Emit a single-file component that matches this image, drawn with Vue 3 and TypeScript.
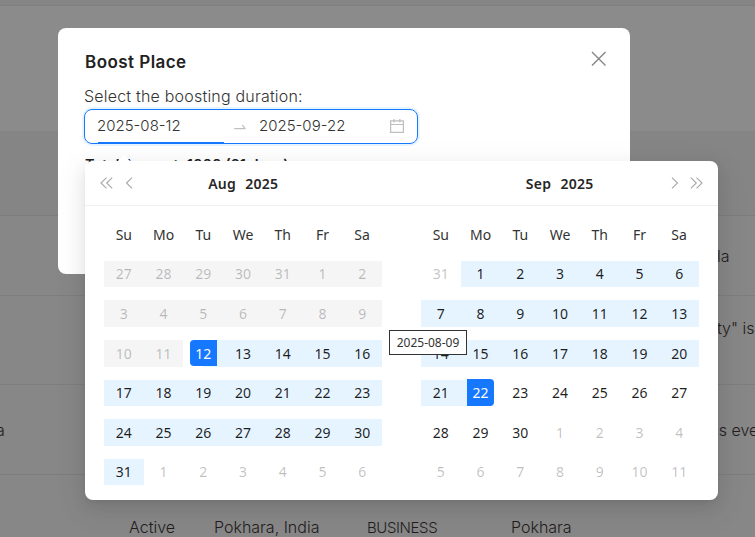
<script setup lang="ts">
import { computed } from 'vue'

interface Cell {
  key: string
  day: number
  inMonth: boolean
  disabled: boolean
  inRange: boolean
  isStart: boolean
  isEnd: boolean
}

const weekdays = ['Su', 'Mo', 'Tu', 'We', 'Th', 'Fr', 'Sa']
const today = new Date(2025, 7, 10)
const start = new Date(2025, 7, 12)
const end = new Date(2025, 8, 22)

function monthCells(year: number, month: number): Cell[] {
  const first = new Date(year, month, 1)
  const offset = first.getDay()
  return Array.from({ length: 42 }, (_, i) => {
    const d = new Date(year, month, 1 - offset + i)
    const inMonth = d.getMonth() === month
    const t = d.getTime()
    return {
      key: `${d.getMonth()}-${d.getDate()}`,
      day: d.getDate(),
      inMonth,
      disabled: t < today.getTime() + 2 * 86400000 && inMonth,
      inRange: inMonth && t >= start.getTime() && t <= end.getTime(),
      isStart: t === start.getTime(),
      isEnd: t === end.getTime(),
    }
  })
}

const panels = computed(() => [
  { title: 'Aug', year: '2025', side: 'left', cells: monthCells(2025, 7) },
  { title: 'Sep', year: '2025', side: 'right', cells: monthCells(2025, 8) },
])

// The previous-month tail that the left panel greys out along with early August.
function cellClass(cell: Cell, index: number, side: string) {
  const greyTail = side === 'left' && index < 5
  return {
    cell: true,
    muted: !cell.inMonth || cell.disabled,
    grey: cell.disabled || greyTail,
    range: cell.inRange,
    'range-start': cell.isStart,
    'range-end': cell.isEnd,
  }
}
</script>

<template>
  <div class="page">
    <div class="topbar"></div>
    <div class="band"></div>
    <div class="row row-a"><span class="far">la</span></div>
    <div class="row row-b"><span class="far high">ty" is c</span></div>
    <div class="row row-c">
      <span class="near">a</span>
      <span class="far mid">s even</span>
    </div>
    <div class="row-last">
      <span class="col c1">Active</span>
      <span class="col c2">Pokhara, India</span>
      <span class="col c3">BUSINESS</span>
      <span class="col">Pokhara</span>
    </div>

    <section class="modal">
      <header class="modal-head">
        <h2>Boost Place</h2>
        <svg class="close" width="16" height="16" viewBox="0 0 16 16" aria-hidden="true">
          <path d="M1 1 14.500 14.500M14.500 1 1 14.500" />
        </svg>
      </header>
      <p class="label">Select the boosting duration:</p>
      <div class="range-input">
        <span class="date first">2025-08-12</span>
        <svg class="swap" width="16" height="16" viewBox="0 0 1024 1024" aria-hidden="true">
          <path d="M873.1 596.2l-164-208A32 32 0 00684 376h-64.8c-6.7 0-10.4 7.7-6.3 13l144.3 183H152c-4.4 0-8 3.6-8 8v60c0 4.4 3.6 8 8 8h695.9c26.8 0 41.7-30.8 25.2-51.8z" />
        </svg>
        <span class="date">2025-09-22</span>
        <svg class="cal" width="18" height="18" viewBox="0 0 1024 1024" aria-hidden="true">
          <path d="M880 184H712v-64c0-4.4-3.6-8-8-8h-56c-4.4 0-8 3.6-8 8v64H384v-64c0-4.4-3.6-8-8-8h-56c-4.4 0-8 3.6-8 8v64H144c-17.7 0-32 14.3-32 32v664c0 17.7 14.3 32 32 32h736c17.7 0 32-14.3 32-32V216c0-17.7-14.3-32-32-32zm-40 656H184V460h656v380zM184 392V256h128v48c0 4.4 3.6 8 8 8h56c4.4 0 8-3.6 8-8v-48h256v48c0 4.4 3.6 8 8 8h56c4.4 0 8-3.6 8-8v-48h128v136H184z" />
        </svg>
        <i class="active-bar"></i>
      </div>
      <p class="total">Total Amount: 1000 (21 days)</p>
    </section>

    <section class="picker">
      <i class="picker-arrow"></i>
      <div class="panels">
        <div v-for="panel in panels" :key="panel.title" class="panel">
          <header class="panel-head" :class="panel.side">
            <template v-if="panel.side === 'left'">
              <svg class="nav dbl" width="13" height="12" viewBox="0 0 13 12" aria-hidden="true"><path d="M6.5.7 1 6l5.500 5.300M12.200.7 6.700 6l5.500 5.300" /></svg>
              <svg class="nav sgl" width="8" height="12" viewBox="0 0 8 12" aria-hidden="true"><path d="M7 .7 1.500 6 7 11.300" /></svg>
            </template>
            <div class="title"><span>{{ panel.title }}</span><span>{{ panel.year }}</span></div>
            <template v-if="panel.side === 'right'">
              <svg class="nav sgl" width="8" height="12" viewBox="0 0 8 12" aria-hidden="true"><path d="M1 .7 6.500 6 1 11.300" /></svg>
              <svg class="nav dbl" width="13" height="12" viewBox="0 0 13 12" aria-hidden="true"><path d="M.8.7 6.300 6 .8 11.300M6.500.7 12 6l-5.500 5.300" /></svg>
            </template>
          </header>
          <div class="grid-wrap">
            <div class="grid">
              <div v-for="w in weekdays" :key="w" class="weekday">{{ w }}</div>
              <div
                v-for="(cell, i) in panel.cells"
                :key="cell.key"
                :class="cellClass(cell, i, panel.side)"
              >
                <span class="num">{{ cell.day }}</span>
              </div>
            </div>
          </div>
        </div>
      </div>
    </section>

    <div class="tooltip">2025-08-09</div>
  </div>
</template>

<style>
html, body { margin: 0; }
</style>

<style scoped>
.page {
  position: relative;
  width: 755px;
  height: 537px;
  overflow: hidden;
  background: #8b8b8b;
  font-family: Inter, "Noto Sans", sans-serif;
  font-weight: 300;
  color: #231c1c;
  display: flex;
  flex-direction: column;
}
.topbar {
  height: 5px;
  flex: none;
  background: #858585;
  border-bottom: 1px solid #7f7f7f;
  margin-bottom: 125px;
}
.band { height: 84px; flex: none; background: #858585; }
.row, .row-last {
  flex: none;
  border-top: 1px solid #7d7d7d;
  display: flex;
  align-items: center;
  font-size: 16px;
  white-space: nowrap;
  background: #878787;
  box-sizing: border-box;
}
.row-a { height: 80px; }
.row-b { height: 89px; }
.row-c { height: 90px; }
.row-last { flex: 1; align-items: flex-end; padding: 0 0 0 129px; }
.near { margin-left: -4px; }
.far { margin-left: 717px; }
.row-b .far { margin-bottom: 24px; }
.row-c .far { margin-left: 714px; }
.c1 { width: 85px; }
.c2 { width: 153px; }
.c3 { width: 144px; font-size: 15px; letter-spacing: -.4px; }

.modal {
  position: absolute;
  left: 58px;
  top: 28px;
  width: 572px;
  height: 246px;
  box-sizing: border-box;
  padding: 23px 26px 24px 27px;
  background: #fff;
  border-radius: 8px;
  overflow: hidden;
}
.modal-head { display: flex; justify-content: space-between; align-items: flex-start; }
h2 {
  margin: 0;
  font-size: 17px;
  line-height: 22px;
  font-weight: 600;
  letter-spacing: .45px;
  color: #222;
}
.close { margin: 0 -3px 0 0; fill: none; stroke: #858585; stroke-width: 1.400; }
.label { margin: 12px 0 2px -1px; font-size: 16px; line-height: 22px; letter-spacing: .2px; color: #333; }
.range-input {
  position: relative;
  width: 334px;
  height: 35px;
  box-sizing: border-box;
  border: 1px solid #1677ff;
  border-radius: 8px;
  box-shadow: 0 0 0 2px rgba(5, 145, 255, .1);
  display: flex;
  align-items: center;
  padding: 0 11px 2px 12px;
  margin-left: -1px;
  font-size: 15px;
  color: #333;
}
.date { white-space: nowrap; }
.first { width: 136px; }
.swap { fill: #bfbfbf; margin: 2px 11px 0 -1px; flex: none; }
.cal { fill: #bfbfbf; margin-left: auto; flex: none; }
.active-bar {
  position: absolute;
  left: 13px;
  bottom: -1px;
  width: 126px;
  height: 2px;
  background: #1677ff;
}
.total { margin: 10px 0 0; font-size: 14.500px; line-height: 22px; font-weight: 600; color: #222; }

.picker {
  position: absolute;
  left: 85px;
  top: 161px;
  width: 633px;
  height: 339px;
  background: #fff;
  border-radius: 8px;
  box-shadow: 0 6px 16px 0 rgba(0, 0, 0, .08), 0 3px 6px -4px rgba(0, 0, 0, .12), 0 9px 28px 8px rgba(0, 0, 0, .05);
  font-family: "Noto Sans", "Open Sans", sans-serif;
  font-weight: 400;
  font-size: 14px;
  color: rgba(0, 0, 0, .88);
}
.picker-arrow {
  position: absolute;
  left: 33px;
  top: -6px;
  width: 0;
  height: 0;
  border-left: 6px solid transparent;
  border-right: 6px solid transparent;
  border-bottom: 6px solid #fff;
}
.panels { display: flex; }
.panel { width: 316.500px; flex: none; }
.panel-head {
  height: 45px;
  box-sizing: border-box;
  padding-top: 1px;
  border-bottom: 1px solid #f0f0f0;
  display: flex;
  align-items: center;
  position: relative;
  justify-content: center;
}
.title { display: flex; gap: 9px; font-weight: 600; font-size: 14px; letter-spacing: .3px; color: #262626; }
.nav { position: absolute; top: 16px; fill: none; stroke: #a8a8a8; stroke-width: 1.100; }
.left .dbl { left: 15px; }
.left .sgl { left: 40px; }
.right .sgl { right: 39px; }
.right .dbl { right: 15px; }
.grid-wrap { padding: 8.400px 19px 0; }
.grid { display: grid; grid-template-columns: repeat(7, 1fr); grid-auto-rows: 39.600px; width: 278px; }
.panel:last-child .grid { margin-left: .5px; }
.weekday { display: flex; align-items: center; justify-content: center; color: #333; }
.cell { position: relative; display: flex; align-items: center; justify-content: center; }
.cell::before {
  content: "";
  position: absolute;
  left: 0;
  right: 0;
  top: 6.800px;
  height: 26.600px;
}
.cell.grey::before { background: #f5f5f5; }
.cell.range::before { background: #e6f4ff; }
.range-start::before { left: 50%; }
.range-end::before { right: 50%; }
.num {
  position: relative;
  min-width: 27px;
  height: 26.600px;
  line-height: 27px;
  text-align: center;
  font-size: 14px;
}
.muted .num { color: rgba(0, 0, 0, .25); }
.range-start .num, .range-end .num { background: #1677ff; color: #fff; }
.range-start .num { border-radius: 4px 0 0 4px; }
.range-end .num { border-radius: 0 4px 4px 0; }

.tooltip {
  position: absolute;
  left: 389px;
  top: 330px;
  width: 78px;
  height: 25px;
  box-sizing: border-box;
  border: 1px solid #333;
  background: #fff;
  font-family: "Noto Sans", "Open Sans", sans-serif;
  font-weight: 400;
  font-size: 12px;
  line-height: 23px;
  text-align: center;
  color: #333;
  white-space: nowrap;
}
</style>
